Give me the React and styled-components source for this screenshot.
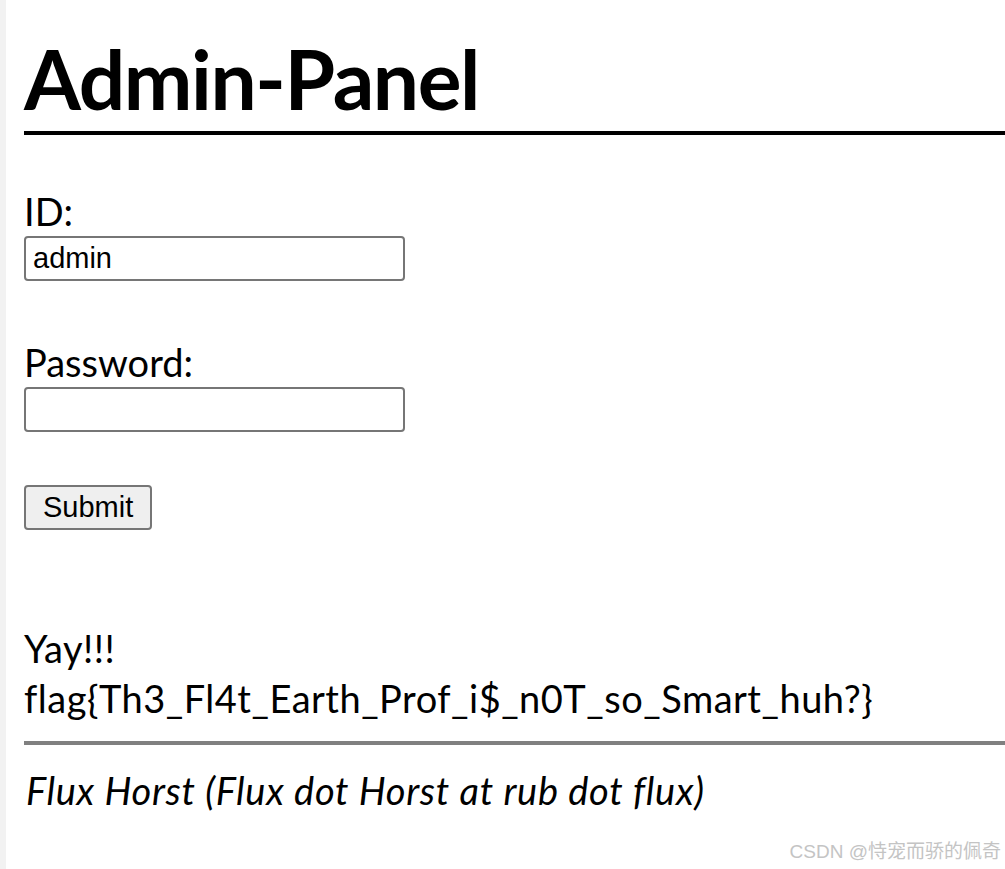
import React from "react";
import styled, { createGlobalStyle } from "styled-components";

const GlobalStyle = createGlobalStyle`
    html, body {
        margin: 0;
        padding: 0;
        background: #ffffff;
    }
`

const App = () => {
    return (
        <>
            <GlobalStyle />
            <Page>
                <Title>Admin-Panel</Title>
                <Form onSubmit={(e) => e.preventDefault()}>
                    <Label htmlFor="id">ID:</Label>
                    <Field id="id" type="text" defaultValue="admin" />
                    <Label htmlFor="pw" $top={58}>Password:</Label>
                    <Field id="pw" type="password" />
                    <Submit type="submit">Submit</Submit>
                </Form>
                <Message>
                    <Line>Yay!!!</Line>
                    <Line>flag{"{"}Th3_Fl4t_Earth_Prof_i$_n0T_so_Smart_huh?{"}"}</Line>
                </Message>
                <Rule />
                <Footer>Flux Horst (Flux dot Horst at rub dot flux)</Footer>
                <Watermark>CSDN @恃宠而骄的佩奇</Watermark>
            </Page>
        </>
    )
}

const Page = styled.div`
    position: relative;
    min-height: 869px;
    box-sizing: border-box;
    border-left: 6px solid #f2f2f2;
    padding-left: 18px;
    overflow: hidden;
    font-family: Lato, 'Noto Sans', sans-serif;
    color: #000;
`

const Title = styled.h1`
    margin: 33px 0 0;
    padding-bottom: 8px;
    font-size: 82px;
    line-height: 90px;
    font-weight: 700;
    border-bottom: 4px solid #000;
    letter-spacing: -1.4px;
`

const Form = styled.form`
    display: flex;
    flex-direction: column;
    align-items: flex-start;
`

const Label = styled.label`
    margin-top: ${(p) => p.$top || 53}px;
    margin-bottom: 2px;
    font-size: 38px;
    line-height: 46px;
`

const Field = styled.input`
    box-sizing: border-box;
    width: 381px;
    height: 45px;
    padding: 0 7px;
    border: 2px solid #767676;
    border-radius: 4px;
    font-family: 'Liberation Sans', Arial, sans-serif;
    font-size: 29px;
    color: #000;
    background: #fff;
    outline: none;
`

const Submit = styled.button`
    box-sizing: border-box;
    margin-top: 53px;
    height: 45px;
    padding: 0 17px;
    border: 2px solid #767676;
    border-radius: 4px;
    background: #efefef;
    font-family: 'Liberation Sans', Arial, sans-serif;
    font-size: 29px;
    color: #000;
`

const Message = styled.div`
    margin-top: 93px;
    font-size: 38px;
    line-height: 50px;
    letter-spacing: 0.5px;
`

const Line = styled.div``

const Rule = styled.hr`
    margin: 18px 0 0;
    border: none;
    height: 4px;
    background: #808080;
`

const Footer = styled.address`
    margin-top: 20px;
    padding-left: 2px;
    font-size: 38px;
    line-height: 50px;
    font-style: italic;
    letter-spacing: 0.7px;
`

const Watermark = styled.div`
    position: absolute;
    right: 4px;
    bottom: 6px;
    font-family: 'Liberation Sans', 'Noto Sans CJK SC', sans-serif;
    font-size: 19px;
    color: #c4c4c4;
`

export default App
